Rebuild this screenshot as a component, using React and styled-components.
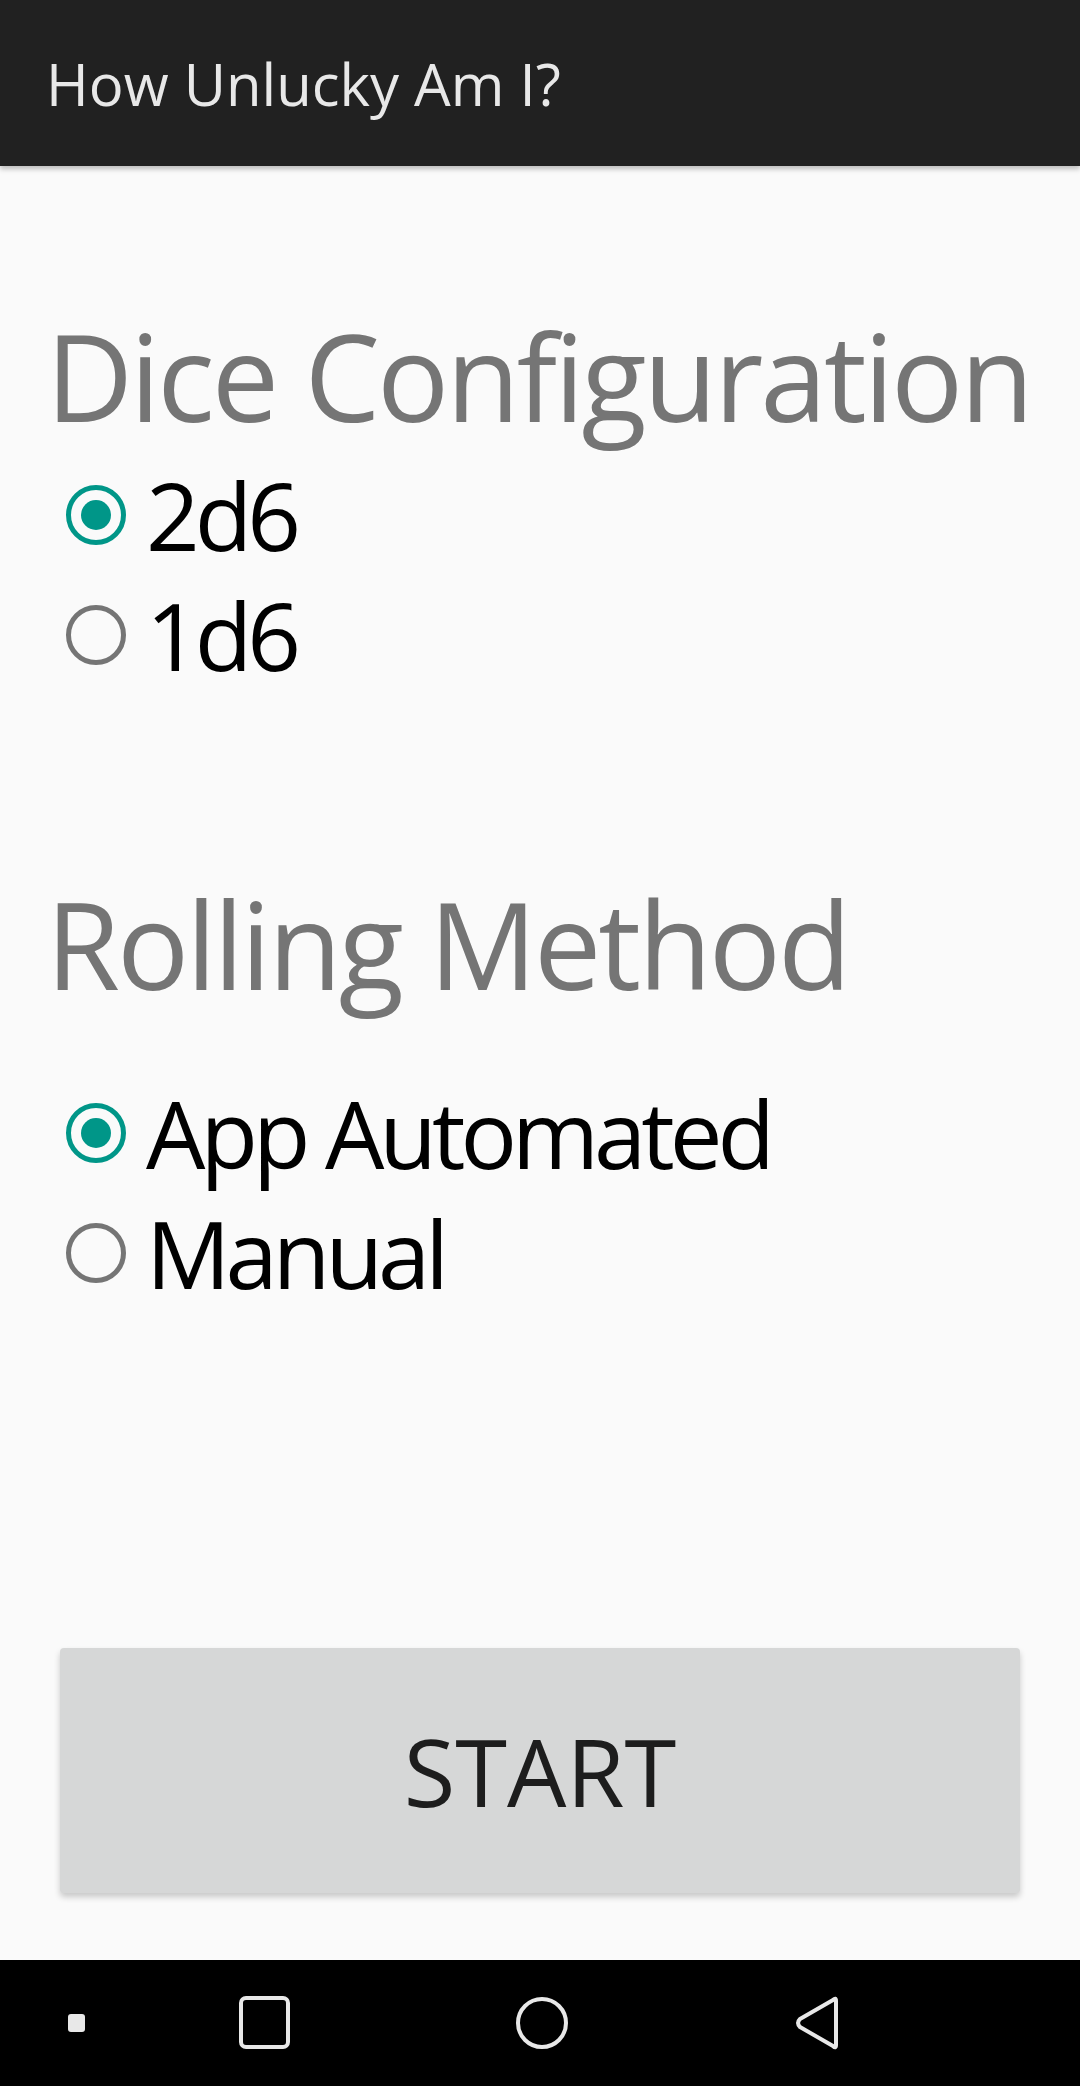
import React, { useState } from 'react';
import styled, { createGlobalStyle } from 'styled-components';

const GlobalStyle = createGlobalStyle`
	html, body {
		margin: 0;
		padding: 0;
		background: #fafafa;
	}
	body {
		font-family: 'Open Sans', 'Noto Sans', sans-serif;
	}
`;

const Screen = styled.div`
	width: 1080px;
	height: 2086px;
	display: flex;
	flex-direction: column;
	background: #fafafa;
	overflow: hidden;
`;

const AppBar = styled.header`
	height: 166px;
	flex-shrink: 0;
	display: flex;
	align-items: center;
	padding-left: 46px;
	background: #212121;
	box-shadow: 0 3px 5px rgba(0, 0, 0, 0.25);
	position: relative;
	z-index: 1;
`;

const Title = styled.h1`
	margin: 0;
	font-size: 58px;
	font-weight: 400;
	color: #e8e8e8;
`;

const Content = styled.main`
	flex: 1;
	display: flex;
	flex-direction: column;
	padding: 150px 46px 0;
`;

const Section = styled.section`
	display: flex;
	flex-direction: column;
	margin-bottom: ${(p) => p.$after || 0}px;
`;

const Heading = styled.h2`
	margin: 0 0 ${(p) => p.$gap}px;
	font-size: 120px;
	line-height: 120px;
	font-weight: 400;
	letter-spacing: -3px;
	white-space: nowrap;
	color: #757575;
`;

const Option = styled.label`
	height: 120px;
	display: flex;
	align-items: center;
	cursor: pointer;
`;

const Radio = styled.span`
	width: 60px;
	height: 60px;
	box-sizing: border-box;
	margin-left: 20px;
	margin-right: 20px;
	border-radius: 50%;
	border: 5px solid ${(p) => (p.$checked ? '#009688' : '#757575')};
	display: flex;
	align-items: center;
	justify-content: center;
	&::after {
		content: '';
		width: 30px;
		height: 30px;
		border-radius: 50%;
		background: #009688;
		display: ${(p) => (p.$checked ? 'block' : 'none')};
	}
`;

const OptionText = styled.span`
	font-size: 94px;
	line-height: 120px;
	letter-spacing: -5px;
	color: #000;
`;

const ButtonRow = styled.div`
	margin-top: auto;
	padding: 0 14px 67px;
`;

const StartButton = styled.button`
	width: 100%;
	height: 245px;
	border: none;
	border-radius: 4px;
	background: #d6d7d7;
	box-shadow: 0 4px 6px rgba(0, 0, 0, 0.2);
	font-family: 'Open Sans', 'Noto Sans', sans-serif;
	font-size: 94px;
	color: #1d1d1d;
	cursor: pointer;
`;

const NavBar = styled.nav`
	height: 126px;
	flex-shrink: 0;
	background: #000;
	display: grid;
	grid-template-columns: 154px 222px 332px 220px 1fr;
	align-items: center;
	justify-items: center;
`;

const NavIcon = styled.svg`
	display: block;
`;

function RadioGroup({ options, value, onChange }) {
	return options.map((o) => (
		<Option key={o} onClick={() => onChange(o)}>
			<Radio $checked={value === o} />
			<OptionText>{o}</OptionText>
		</Option>
	));
}

export default function App() {
	const [dice, setDice] = useState('2d6');
	const [method, setMethod] = useState('App Automated');

	return (
		<Screen>
			<GlobalStyle />
			<AppBar>
				<Title>How Unlucky Am I?</Title>
			</AppBar>
			<Content>
				<Section $after={189}>
					<Heading $gap={19}>Dice Configuration</Heading>
					<RadioGroup options={['2d6', '1d6']} value={dice} onChange={setDice} />
				</Section>
				<Section>
					<Heading $gap={69}>Rolling Method</Heading>
					<RadioGroup
						options={['App Automated', 'Manual']}
						value={method}
						onChange={setMethod}
					/>
				</Section>
				<ButtonRow>
					<StartButton>START</StartButton>
				</ButtonRow>
			</Content>
			<NavBar>
				<NavIcon width="20" height="20" viewBox="0 0 20 20">
					<rect x="1" y="1" width="17" height="18" rx="3" fill="#e8e8e8" />
				</NavIcon>
				<NavIcon width="54" height="54" viewBox="0 0 54 54">
					<rect x="3" y="2" width="47" height="49" rx="5" fill="none" stroke="#e8e8e8" strokeWidth="4" />
				</NavIcon>
				<NavIcon width="56" height="56" viewBox="0 0 56 56">
					<circle cx="28" cy="28" r="24" fill="none" stroke="#e8e8e8" strokeWidth="4" />
				</NavIcon>
				<NavIcon width="54" height="56" viewBox="0 0 54 56">
					<path
						d="M45 6 Q45 2 42 5 L9 24 Q5 28 9 32 L42 51 Q45 54 45 50 Z"
						fill="none"
						stroke="#e8e8e8"
						strokeWidth="4"
						strokeLinejoin="round"
					/>
				</NavIcon>
				<span />
			</NavBar>
		</Screen>
	);
}
